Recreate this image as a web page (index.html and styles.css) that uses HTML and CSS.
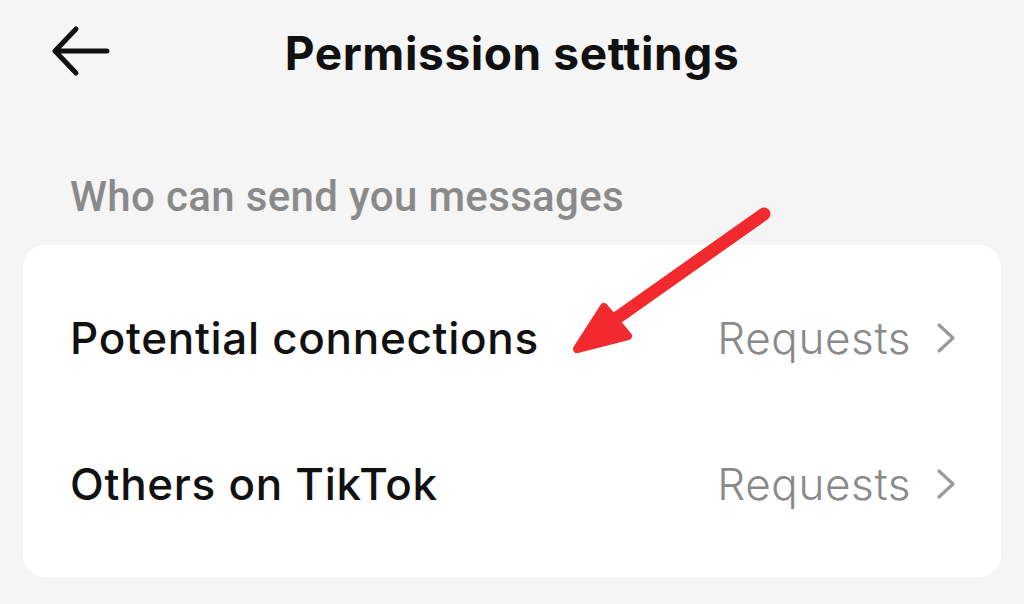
FILE: index.html
```html
<!DOCTYPE html>
<html>
<head>
<meta charset="utf-8">
<link rel="stylesheet" href="styles.css">
</head>
<body>
<div class="page">
  <header class="header">
    <svg class="back" width="60" height="52" viewBox="0 0 60 52">
      <path d="M26 4 L5 26 L26 48 M5 26 L57 26" fill="none" stroke="#111" stroke-width="5" stroke-linecap="round" stroke-linejoin="round"/>
    </svg>
    <h1 class="title">Permission settings</h1>
  </header>
  <div class="section-label">Who can send you messages</div>
  <div class="card">
    <div class="row">
      <span class="row-title">Potential connections</span>
      <span class="row-value">Requests <svg class="chev" width="22" height="32" viewBox="0 0 22 32"><path d="M4 3 L18 16 L4 29" fill="none" stroke="#9a9a9a" stroke-width="3.2" stroke-linecap="round" stroke-linejoin="round"/></svg></span>
    </div>
    <div class="row">
      <span class="row-title">Others on TikTok</span>
      <span class="row-value">Requests <svg class="chev" width="22" height="32" viewBox="0 0 22 32"><path d="M4 3 L18 16 L4 29" fill="none" stroke="#9a9a9a" stroke-width="3.2" stroke-linecap="round" stroke-linejoin="round"/></svg></span>
    </div>
  </div>
  <svg class="annot" width="1024" height="604" viewBox="0 0 1024 604">
    <path d="M764 214 L614 320" fill="none" stroke="#f2292e" stroke-width="13" stroke-linecap="round"/>
    <path d="M577 349 L604 307 L628 336 Z" fill="#f2292e" stroke="#f2292e" stroke-width="8" stroke-linejoin="round"/>
  </svg>
</div>
</body>
</html>
```
FILE: styles.css
```css
html, body {
  margin: 0;
  padding: 0;
  background: #f5f5f5;
}
.page {
  position: relative;
  width: 1024px;
  height: 604px;
  overflow: hidden;
  font-family: Inter, "Liberation Sans", sans-serif;
}
.header {
  position: relative;
  height: 110px;
  display: flex;
  align-items: center;
  justify-content: center;
}
.back {
  position: absolute;
  left: 50px;
  top: 25px;
}
.title {
  margin: 0;
  margin-top: -4px;
  font-size: 46px;
  font-weight: 700;
  color: #111;
  letter-spacing: 0.6px;
}
.section-label {
  padding: 65px 0 0 70px;
  height: 72px;
  box-sizing: border-box;
  font-family: Roboto, sans-serif;
  font-weight: 500;
  font-size: 42px;
  color: #8a8a8a;
  line-height: 44px;
  letter-spacing: 0.35px;
}
.card {
  margin: 63px 23px 0;
  background: #fff;
  border-radius: 22px;
  padding: 20px 0;
}
.row {
  height: 146px;
  display: flex;
  align-items: center;
  justify-content: space-between;
  padding: 0 44px 0 47px;
}
.row-title {
  font-size: 44px;
  font-weight: 500;
  color: #111;
  letter-spacing: 0.7px;
}
.row-value {
  display: flex;
  align-items: center;
  gap: 24px;
  font-size: 44px;
  font-weight: 300;
  color: #8a8a8a;
  letter-spacing: 0.6px;
}
.annot {
  position: absolute;
  left: 0;
  top: 0;
  pointer-events: none;
}
```
